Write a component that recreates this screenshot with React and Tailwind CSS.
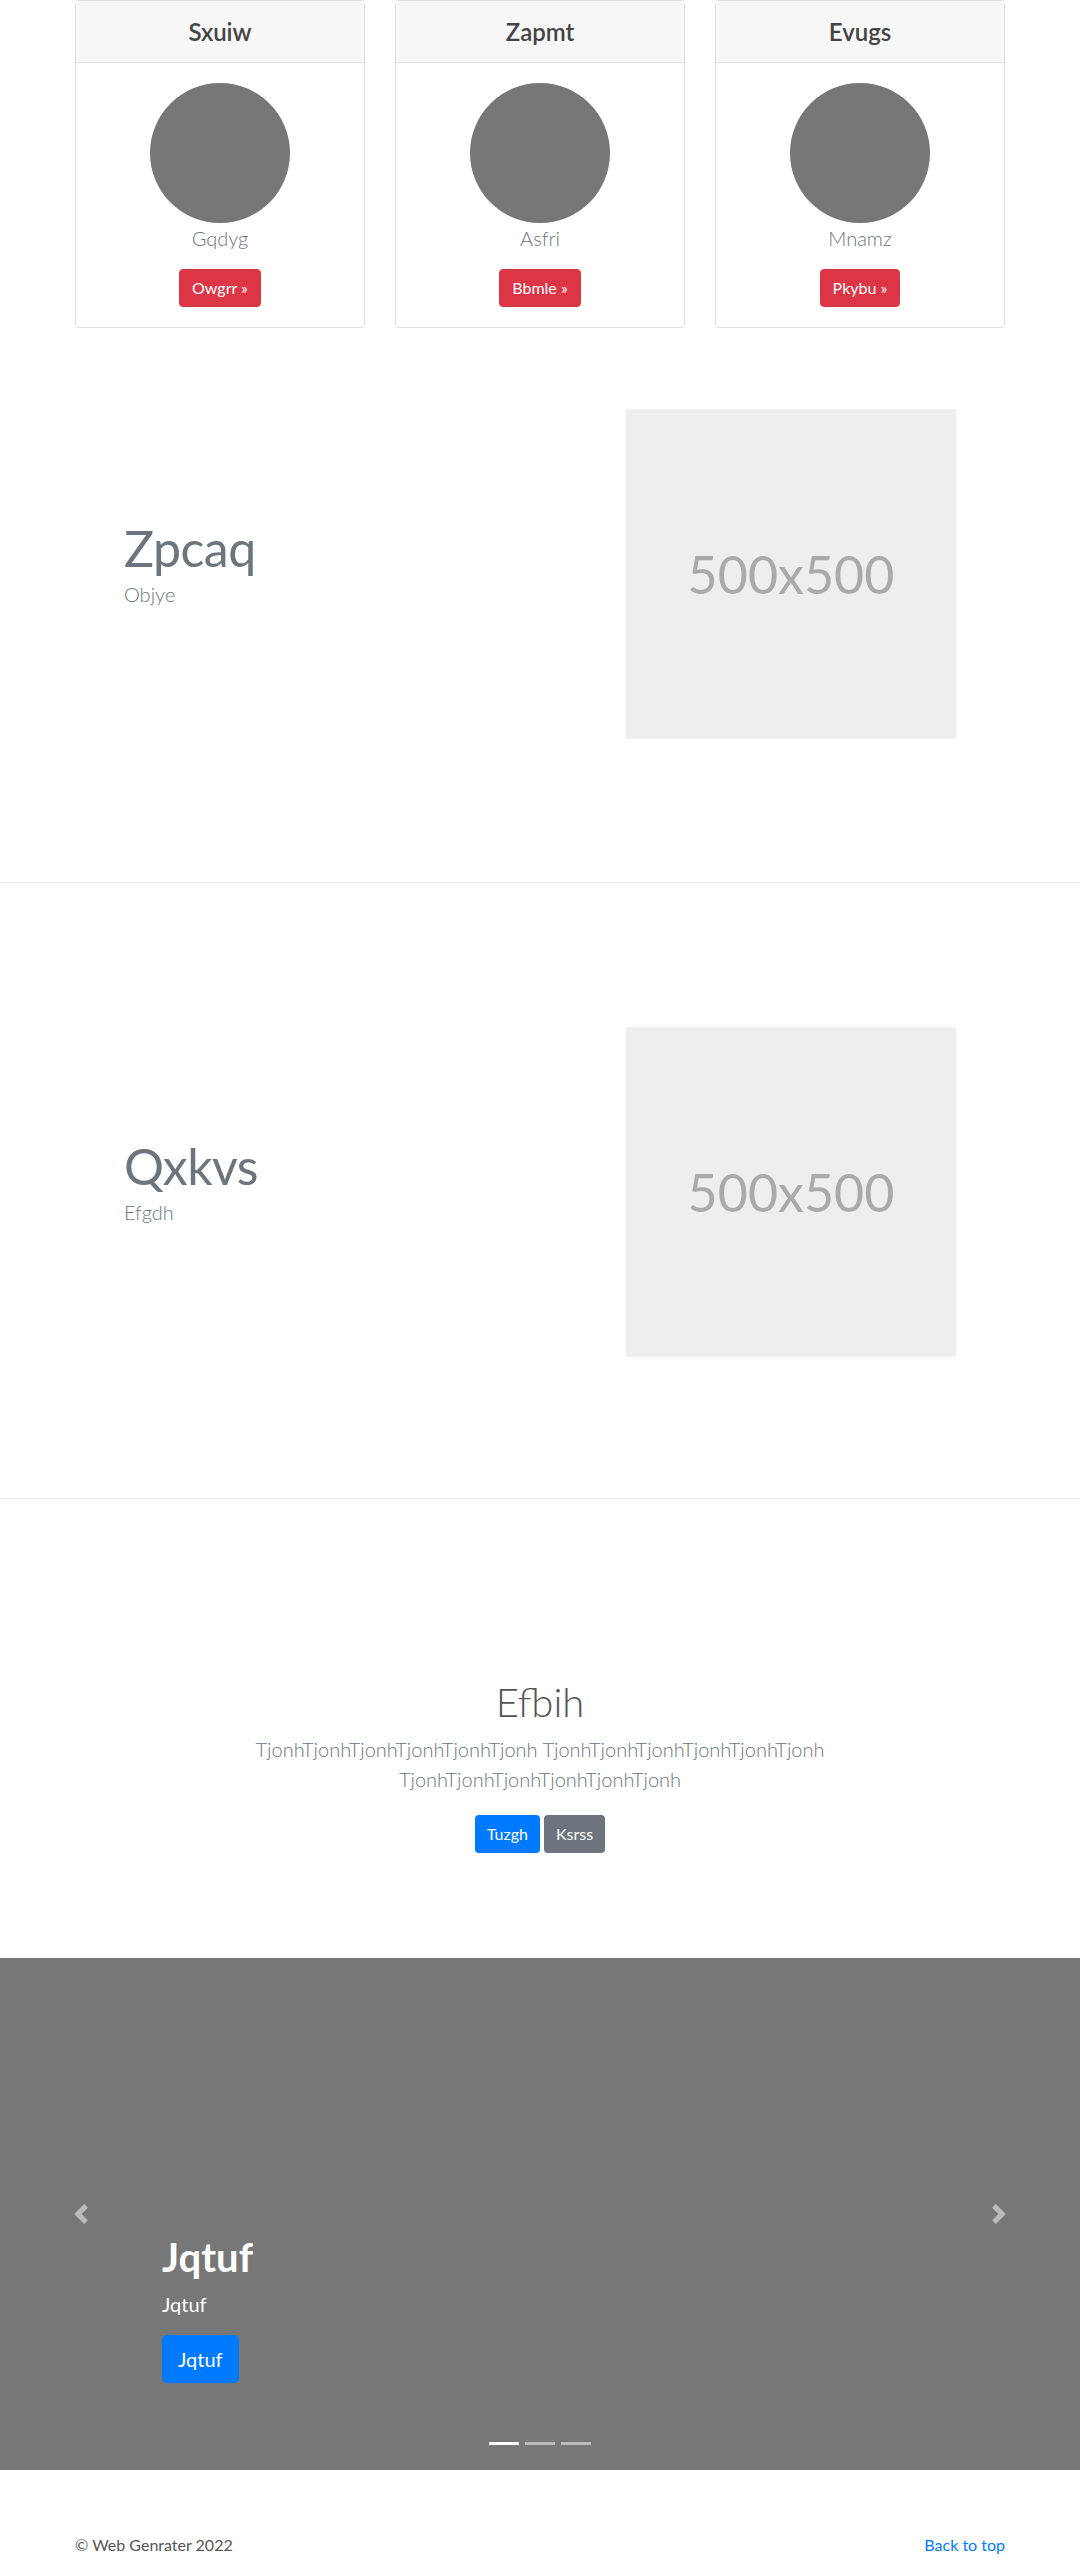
import React from 'react';

const cards = [
  { title: 'Sxuiw', name: 'Gqdyg', cta: 'Owgrr' },
  { title: 'Zapmt', name: 'Asfri', cta: 'Bbmle' },
  { title: 'Evugs', name: 'Mnamz', cta: 'Pkybu' },
];

function Featurette({ heading, sub, top, bottom }) {
  return (
    <div className={`w-[930px] mx-auto flex items-center pr-[49px] ${top} ${bottom}`}>
      <div className="flex-1 pl-[49px]">
        <h2 className="text-[50px] leading-[50px] font-normal text-[#6c757d] tracking-[-0.5px]">{heading}</h2>
        <p className="text-[20px] leading-[30px] font-light text-[#6c757d] mt-[6px] mb-4">{sub}</p>
      </div>
      <div className="w-[330px] h-[330px] bg-[#eeeeee] flex items-center justify-center">
        <span className="text-[52px] text-[#aaaaaa]">500x500</span>
      </div>
    </div>
  );
}

function ChevronLeft() {
  return (
    <svg width="20" height="20" viewBox="0 0 8 8" fill="#fff">
      <path d="M5.25 0l-4 4 4 4 1.5-1.5-2.5-2.5 2.5-2.5-1.5-1.5z" />
    </svg>
  );
}

function ChevronRight() {
  return (
    <svg width="20" height="20" viewBox="0 0 8 8" fill="#fff">
      <path d="M2.75 0l-1.5 1.5 2.5 2.5-2.5 2.5 1.5 1.5 4-4-4-4z" />
    </svg>
  );
}

export default function App() {
  return (
    <div className="bg-white text-[#212529] font-['Lato','Open_Sans',sans-serif]">
      {/* Cards */}
      <div className="w-[930px] mx-auto grid grid-cols-3 gap-[30px]">
        {cards.map((c) => (
          <div key={c.title} className="border border-[#dfdfdf] rounded-[4px] overflow-hidden">
            <div className="h-[62px] bg-[#f7f7f7] border-b border-[#dfdfdf] flex items-center justify-center">
              <h4 className="text-[24px] font-semibold text-[#444]">{c.title}</h4>
            </div>
            <div className="p-[20px] text-center">
              <div className="w-[140px] h-[140px] rounded-full bg-[#777777] mx-auto"></div>
              <p className="text-[20px] leading-[30px] font-light text-[#6c757d] mb-4">{c.name}</p>
              <button className="bg-[#dc3545] text-white text-[16px] leading-[24px] px-[12px] py-[6px] rounded-[4px] border border-[#dc3545]">
                {c.cta} &raquo;
              </button>
            </div>
          </div>
        ))}
      </div>

      <Featurette heading="Zpcaq" sub="Objye" top="mt-[81px]" bottom="mb-[143px]" />
      <div className="h-px bg-[#e5e5e5]"></div>
      <Featurette heading="Qxkvs" sub="Efgdh" top="mt-[144px]" bottom="mb-[141px]" />
      <div className="h-px bg-[#e5e5e5]"></div>

      {/* Jumbotron */}
      <section className="pt-[179px] pb-[97px] text-center">
        <h1 className="text-[40px] leading-[48px] font-light text-[#555] mb-2">Efbih</h1>
        <p className="text-[20px] leading-[30px] font-light text-[#6c757d] mb-4">
          <span className="block">TjonhTjonhTjonhTjonhTjonhTjonh TjonhTjonhTjonhTjonhTjonhTjonh</span>
          <span className="block">TjonhTjonhTjonhTjonhTjonhTjonh</span>
        </p>
        <p className="mt-[21px] mb-2 flex justify-center gap-[4px]">
          <button className="bg-[#007bff] text-white text-[16px] leading-[24px] px-[12px] py-[7px] rounded-[4px]">Tuzgh</button>
          <button className="bg-[#6c757d] text-white text-[16px] leading-[24px] px-[12px] py-[7px] rounded-[4px]">Ksrss</button>
        </p>
      </section>

      {/* Carousel */}
      <div className="relative h-[512px] bg-[#777777]">
        <div className="absolute left-0 top-0 bottom-0 w-[15%] flex items-center justify-center opacity-50">
          <ChevronLeft />
        </div>
        <div className="absolute right-0 top-0 bottom-0 w-[15%] flex items-center justify-center opacity-50">
          <ChevronRight />
        </div>
        <div className="absolute left-[15%] right-[15%] bottom-[87px] text-white text-left">
          <h1 className="text-[40px] leading-[48px] font-bold mb-2">Jqtuf</h1>
          <p className="text-[20px] leading-[30px] mb-4">Jqtuf</p>
          <button className="bg-[#007bff] text-white text-[20px] leading-[30px] px-[16px] py-[9px] rounded-[5px]">Jqtuf</button>
        </div>
        <div className="absolute left-0 right-0 bottom-[25px] flex justify-center gap-[6px]">
          <span className="w-[30px] h-[3px] bg-white"></span>
          <span className="w-[30px] h-[3px] bg-white/50"></span>
          <span className="w-[30px] h-[3px] bg-white/50"></span>
        </div>
      </div>

      {/* Footer */}
      <footer className="w-[930px] mx-auto pt-[63px] pb-[16px] flex justify-between text-[16px] leading-[24px]">
        <p className="text-[#555]">&copy; Web Genrater 2022</p>
        <a href="#" className="text-[#007bff]">Back to top</a>
      </footer>
    </div>
  );
}
